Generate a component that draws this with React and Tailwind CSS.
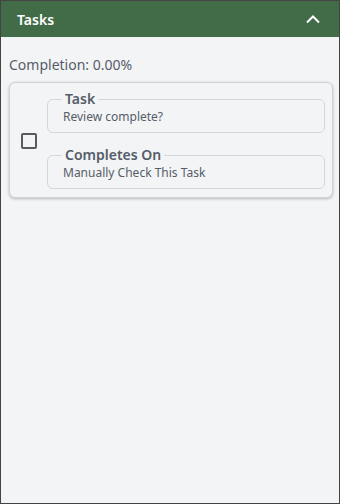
export default function App() {
  const fields = [
    { label: "Task", value: "Review complete?" },
    { label: "Completes On", value: "Manually Check This Task" },
  ];

  return (
    <div
      className="h-[504px] w-[340px] border border-[#444] bg-[#f3f4f6] text-[#555d69]"
      style={{ fontFamily: '"Segoe UI", "Noto Sans", Arial, sans-serif' }}
    >
      <div className="flex h-9 items-center justify-between bg-[#426b47] pl-4 pr-[18px]">
        <span className="text-[14px] font-semibold text-white">Tasks</span>
        <svg width="16" height="10" viewBox="0 0 16 10" fill="none">
          <path d="M2 8.5 8 2.5l6 6" stroke="white" strokeWidth="2" />
        </svg>
      </div>
      <div className="pl-2 pr-[6px] pt-[18px]">
        <div className="text-[14px] leading-5">Completion: 0.00%</div>
        <div className="mt-[7px] flex items-center rounded-md border border-[#cfd2d6] bg-[#f3f4f6] pb-[8px] pl-[11px] pr-[7px] pt-[8px] shadow-[0_1px_3px_rgba(0,0,0,0.25)]">
          <div className="mt-[2px] h-4 w-4 shrink-0 rounded-[2px] border-2 border-[#5a5a5a]" />
          <div className="ml-[10px] flex flex-1 flex-col gap-[14px]">
            {fields.map((f) => (
              <fieldset
                key={f.label}
                className="rounded-md border border-[#d4d6da] px-[15px] pb-[7px]"
              >
                <legend className="-ml-[1px] px-[3px] text-[14px] font-semibold leading-4 text-[#555d69]">
                  {f.label}
                </legend>
                <div className="mt-[2px] text-[12px] leading-4">{f.value}</div>
              </fieldset>
            ))}
          </div>
        </div>
      </div>
    </div>
  );
}
